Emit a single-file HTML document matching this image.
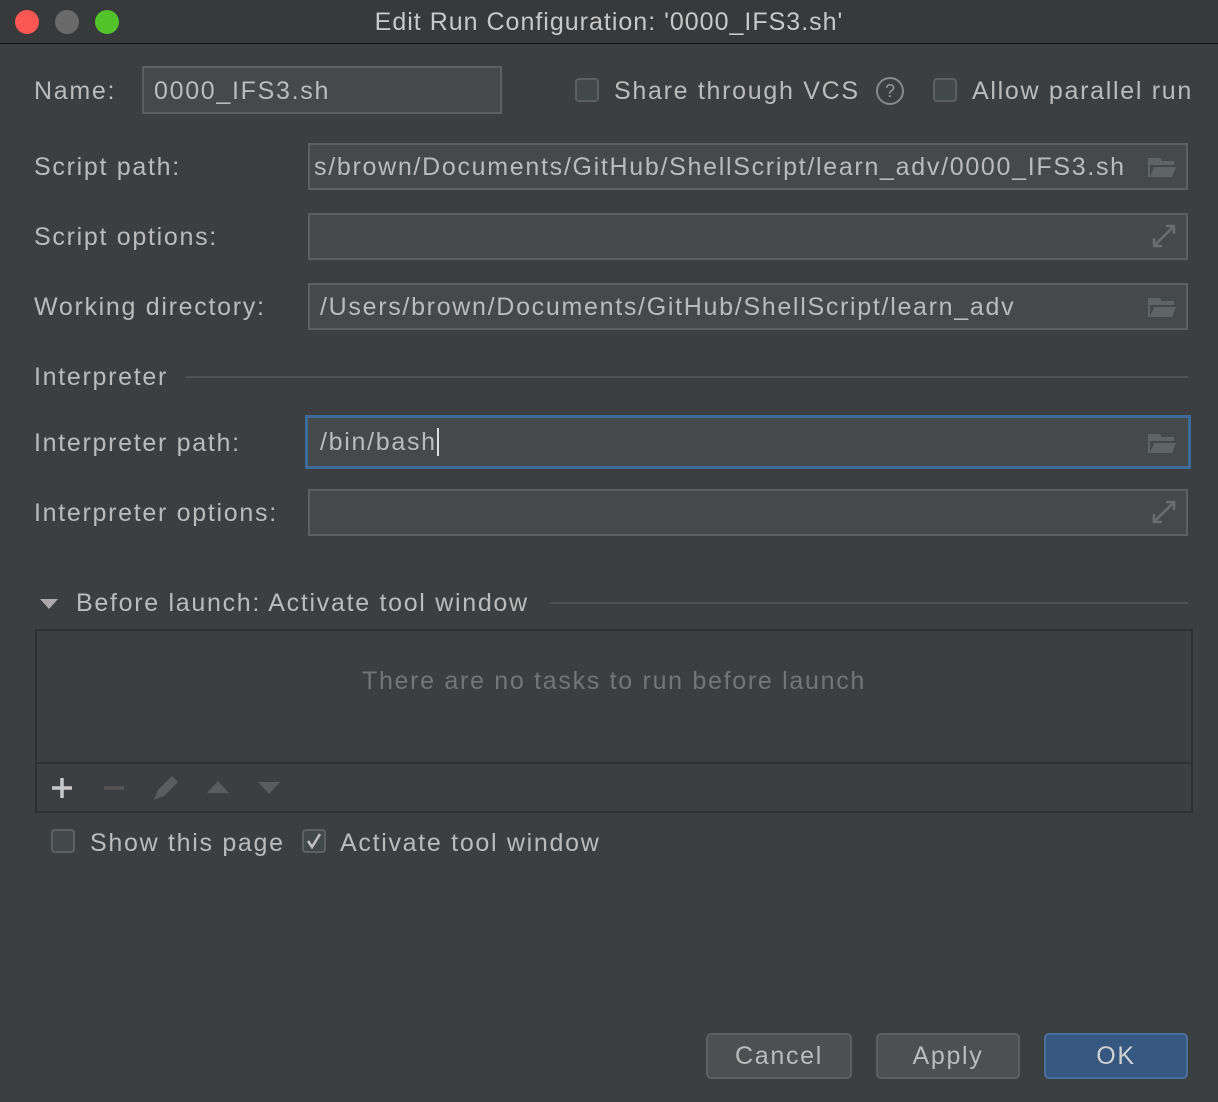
<!DOCTYPE html>
<html><head><style>
body{margin:0;width:1218px;height:1102px;background:#3c3f41;font-family:"Liberation Sans",sans-serif;color:#bbbbbb;overflow:hidden;position:relative}
.a{position:absolute}
.t{font-size:25px;white-space:nowrap;line-height:30px;letter-spacing:1.7px}
.f{position:absolute;background:#45494a;border:2px solid #5e6060;box-sizing:border-box}
.cb{position:absolute;width:24px;height:24px;border:2px solid #5e6162;border-radius:4px;background:#43494a;box-sizing:border-box}
.btn{position:absolute;top:1033px;height:46px;border:2px solid #5e6060;border-radius:5px;background:#4c5052;box-sizing:border-box;text-align:center;line-height:42px;font-size:25px;letter-spacing:1.7px}
</style></head><body>
<div class="a" style="left:0;top:0;width:1218px;height:43px;background:#38393a;border-bottom:1px solid #111"></div>
<div class="a" style="left:15px;top:10px;width:24px;height:24px;border-radius:50%;background:#fd5754"></div>
<div class="a" style="left:55px;top:10px;width:24px;height:24px;border-radius:50%;background:#6a6a6a"></div>
<div class="a" style="left:95px;top:10px;width:24px;height:24px;border-radius:50%;background:#53c22b"></div>
<div class="a t" style="left:0;width:1218px;top:7px;text-align:center;color:#c8c8c8;letter-spacing:1px">Edit Run Configuration: '0000_IFS3.sh'</div>

<div class="a t" style="left:34px;top:76px">Name:</div>
<div class="f" style="left:142px;top:66px;width:360px;height:48px"></div>
<div class="a t" style="left:154px;top:76px">0000_IFS3.sh</div>
<div class="cb" style="left:575px;top:78px"></div>
<div class="a t" style="left:614px;top:76px">Share through VCS</div>
<div class="a" style="left:876px;top:77px;width:24px;height:24px;border:2px solid #888;border-radius:50%;font-size:18px;line-height:24px;text-align:center;color:#999">?</div>
<div class="cb" style="left:933px;top:78px"></div>
<div class="a t" style="left:972px;top:76px">Allow parallel run</div>

<div class="a t" style="left:34px;top:152px">Script path:</div>
<div class="f" style="left:308px;top:143px;width:880px;height:47px;overflow:hidden"><div class="t" style="position:absolute;left:4px;top:7px">s/brown/Documents/GitHub/ShellScript/learn_adv/0000_IFS3.sh</div></div>
<div class="a t" style="left:34px;top:222px">Script options:</div>
<div class="f" style="left:308px;top:213px;width:880px;height:47px"></div>
<div class="a t" style="left:34px;top:292px">Working directory:</div>
<div class="f" style="left:308px;top:283px;width:880px;height:47px"><div class="t" style="position:absolute;left:10px;top:7px">/Users/brown/Documents/GitHub/ShellScript/learn_adv</div></div>

<div class="a t" style="left:34px;top:362px">Interpreter</div>
<div class="a" style="left:186px;top:376px;width:1002px;height:2px;background:#515151"></div>
<div class="a t" style="left:34px;top:428px">Interpreter path:</div>
<div class="f" style="left:305px;top:415px;width:886px;height:54px;border:3px solid #3d6a98"><div class="t" style="position:absolute;left:12px;top:9px">/bin/bash<span style="display:inline-block;width:2px;height:28px;background:#ddd;vertical-align:-6px"></span></div></div>
<div class="a t" style="left:34px;top:498px">Interpreter options:</div>
<div class="f" style="left:308px;top:489px;width:880px;height:47px"></div>

<svg class="a" style="left:0;top:0" width="1218" height="560">
<path d="M1148 158h12l2 3h12v4h-24v12h-2z" fill="#5f6466"/><path d="M1150 177l4-10h22l-4 10z" fill="#5f6466"/>
<path d="M1148 298h12l2 3h12v4h-24v12h-2z" fill="#5f6466"/><path d="M1150 317l4-10h22l-4 10z" fill="#5f6466"/>
<path d="M1148 434h12l2 3h12v4h-24v12h-2z" fill="#5f6466"/><path d="M1150 453l4-10h22l-4 10z" fill="#5f6466"/>
<g stroke="#6a6e70" stroke-width="2.5" fill="none"><path d="M1154 246l20-20M1166 226h8v8M1154 238v8h8M1154 522l20-20M1166 502h8v8M1154 514v8h8"/></g>
</svg>

<div class="a" style="left:40px;top:599px;width:0;height:0;border-left:9px solid transparent;border-right:9px solid transparent;border-top:10px solid #aaa"></div>
<div class="a t" style="left:76px;top:588px">Before launch: Activate tool window</div>
<div class="a" style="left:550px;top:602px;width:638px;height:2px;background:#515151"></div>
<div class="a" style="left:35px;top:629px;width:1158px;height:184px;border:2px solid #2e3032;box-sizing:border-box"></div>
<div class="a" style="left:35px;top:762px;width:1158px;height:2px;background:#2e3032"></div>
<div class="a t" style="left:0;width:1228px;text-align:center;top:666px;color:#737678">There are no tasks to run before launch</div>
<svg class="a" style="left:40px;top:770px" width="260" height="36">
<path d="M22 8v20M12 18h20" stroke="#c8c8c8" stroke-width="3.5"/>
<path d="M64 18h20" stroke="#555" stroke-width="3.5"/>
<path d="M114 30l4-10 14-14 6 6-14 14z" fill="#5a5d5f"/>
<path d="M167 23l11-12 11 12z" fill="#5a5d5f"/><path d="M218 12l11 12 11-12z" fill="#5a5d5f"/>
</svg>
<div class="cb" style="left:51px;top:829px"></div>
<div class="a t" style="left:90px;top:828px">Show this page</div>
<div class="cb" style="left:302px;top:829px"></div>
<svg class="a" style="left:302px;top:829px" width="24" height="24"><path d="M6 12l4 6 8-13" stroke="#c0c0c0" stroke-width="2.5" fill="none"/></svg>
<div class="a t" style="left:340px;top:828px">Activate tool window</div>

<div class="btn" style="left:706px;width:146px">Cancel</div>
<div class="btn" style="left:876px;width:144px">Apply</div>
<div class="btn" style="left:1044px;width:144px;background:#365880;border-color:#4a6f98;color:#d0d0d0">OK</div>
</body></html>
